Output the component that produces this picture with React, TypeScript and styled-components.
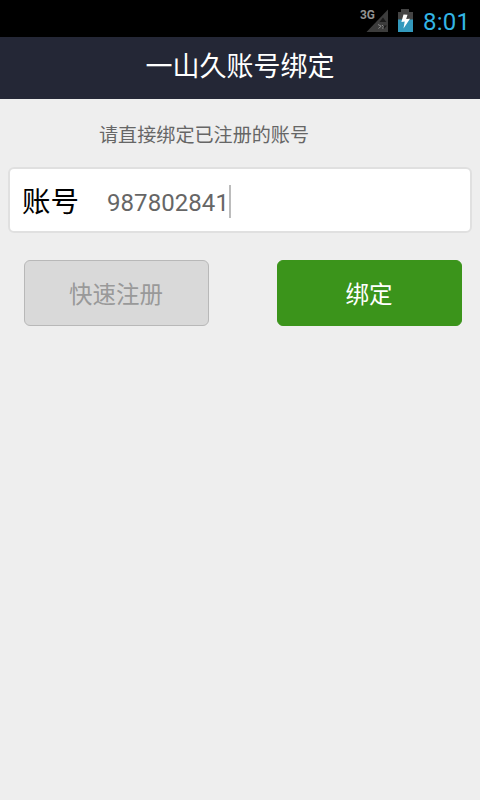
import React from "react";
import styled, { createGlobalStyle } from "styled-components";

const GlobalStyle = createGlobalStyle`
  * { box-sizing: border-box; }
  body {
    margin: 0;
    background: #eeeeee;
    font-family: Roboto, "Noto Sans CJK SC", sans-serif;
  }
`;

const Screen = styled.div`
  display: flex;
  flex-direction: column;
  width: 480px;
  height: 800px;
  overflow: hidden;
  background: #eeeeee;
`;

const StatusBar = styled.div`
  display: flex;
  justify-content: flex-end;
  height: 37px;
  padding-right: 11px;
  background: #000;
`;

const StatusIcons = styled.svg`
  width: 60px;
  height: 37px;
  margin-right: 7px;
`;

const Clock = styled.span`
  padding-top: 5px;
  color: #33b5e5;
  font-size: 24px;
  line-height: 35px;
  letter-spacing: 0.2px;
  width: 46px;
  white-space: nowrap;
`;

const TitleBar = styled.header`
  height: 62px;
  background: #242736;
  color: #fff;
  font: 400 27px/56px "Noto Sans CJK SC", sans-serif;
  text-align: center;
`;

const Hint = styled.p`
  height: 68px;
  margin: 0;
  padding-left: 99px;
  color: #666;
  font: 400 19.1px/70px "Noto Sans CJK SC", sans-serif;
`;

const Field = styled.label`
  display: flex;
  align-items: center;
  height: 66px;
  margin: 0 8px;
  padding-left: 12px;
  border: 2px solid #e0e0e0;
  border-radius: 6px;
  background: #fff;
`;

const FieldName = styled.span`
  width: 85px;
  color: #000;
  font: 400 28.5px/62px "Noto Sans CJK SC", sans-serif;
`;

const FieldValue = styled.span`
  padding-top: 5px;
  color: #666;
  font-size: 24px;
  line-height: 30px;
  letter-spacing: 0.06px;
`;

const Caret = styled.i`
  width: 2px;
  height: 33px;
  margin-top: 3px;
  background: #bcbcbc;
`;

const Actions = styled.div`
  display: flex;
  justify-content: space-between;
  padding: 27px 18px 0 24px;
`;

const Button = styled.button<{ $primary?: boolean }>`
  width: 185px;
  height: 66px;
  padding: 0 1px 1px 0;
  border: 1px solid ${(p) => (p.$primary ? "#3b941b" : "#b8b8b8")};
  border-radius: 6px;
  background: ${(p) => (p.$primary ? "#3b941b" : "#d9d9d9")};
  color: ${(p) => (p.$primary ? "#fff" : "#999")};
  font: 400 23.5px/60px "Noto Sans CJK SC", sans-serif;
`;

const SignalAndBattery = () => (
  <StatusIcons viewBox="356 0 60 37">
    <path d="M366.5 32 388 9.5V32Z" fill="#3c3c3c" />
    <path d="M379.5 22 383 17.5l3.3 4.5ZM384 25.5h3l-3 3.5Z" fill="#1a1a1a" />
    <path d="m378 24.5 3.2 1.7-2.8 2.3M382 25l1.5 1.5M382 28h1.5" fill="none" stroke="#8b8b8b" />
    <text
      x="360"
      y="18.7"
      fill="#929292"
      fontFamily="Roboto, sans-serif"
      fontSize="12.5"
      fontWeight="700"
      textLength="15"
      lengthAdjust="spacingAndGlyphs"
    >
      3G
    </text>
    <path d="M401 9h8v3h4v20h-15V12h3Z" fill="#444" />
    <path d="M398 19.5h15V32h-15Z" fill="#3399bd" />
    <path d="m403.5 14.5 4 .2-1.3 4.3 3.8-.3-6.5 9.8 1.2-7-3.3.4Z" fill="#fff" />
  </StatusIcons>
);

export default function App() {
  return (
    <>
      <GlobalStyle />
      <Screen>
        <StatusBar>
          <SignalAndBattery />
          <Clock>8:01</Clock>
        </StatusBar>
        <TitleBar>一山久账号绑定</TitleBar>
        <Hint>请直接绑定已注册的账号</Hint>
        <Field>
          <FieldName>账号</FieldName>
          <FieldValue>987802841</FieldValue>
          <Caret />
        </Field>
        <Actions>
          <Button>快速注册</Button>
          <Button $primary>绑定</Button>
        </Actions>
      </Screen>
    </>
  );
}
